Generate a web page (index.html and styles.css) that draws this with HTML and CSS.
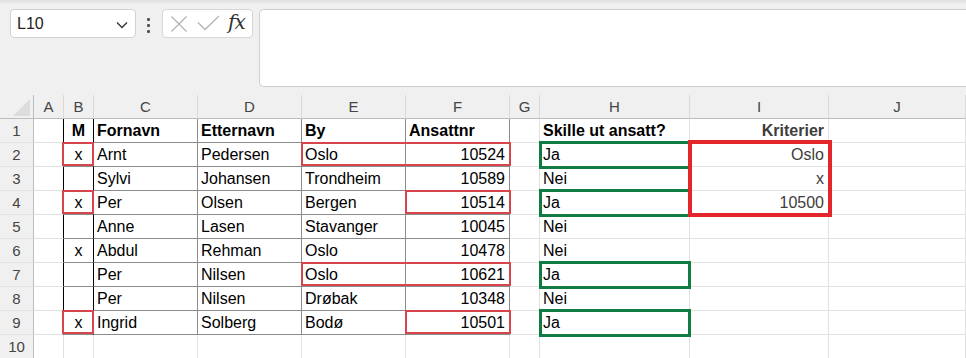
FILE: index.html
```html
<!DOCTYPE html>
<html lang="no">
<head>
<meta charset="utf-8">
<title>Excel</title>
<link rel="stylesheet" href="styles.css">
</head>
<body>
<div class="app">
  <div class="toolbar">
    <div class="namebox">
      <span class="nb-text">L10</span>
      <svg class="chev" width="12" height="8" viewBox="0 0 12 8"><path d="M1 1.5 L6 6.5 L11 1.5" fill="none" stroke="#333" stroke-width="1.3"/></svg>
    </div>
    <div class="dots"><i></i><i></i><i></i></div>
    <div class="iconbox">
      <svg class="ico-x" width="18" height="18" viewBox="0 0 18 18"><path d="M1.5 1.5 L16.5 16.5 M16.5 1.5 L1.5 16.5" stroke="#b3b3b3" stroke-width="1.3" fill="none"/></svg>
      <svg class="ico-ok" width="23" height="16" viewBox="0 0 23 16"><path d="M1 7.5 L8 14.5 L22 1" stroke="#b3b3b3" stroke-width="1.3" fill="none"/></svg>
      <span class="fx">fx</span>
    </div>
    <div class="formula"></div>
  </div>

  <div class="sheet">
    <!-- header row -->
    <div class="corner"><svg width="17" height="17" viewBox="0 0 17 17"><path d="M17 0 L17 17 L0 17 Z" fill="#dcdcdc"/></svg></div>
    <div class="ch">A</div><div class="ch">B</div><div class="ch">C</div><div class="ch">D</div><div class="ch">E</div><div class="ch">F</div><div class="ch">G</div><div class="ch">H</div><div class="ch">I</div><div class="ch">J</div>

    <!-- row 1 -->
    <div class="rh">1</div>
    <div class="c bk"></div>
    <div class="c t bk m b">M</div>
    <div class="c t b">Fornavn</div>
    <div class="c t b">Etternavn</div>
    <div class="c t b">By</div>
    <div class="c t b">Ansattnr</div>
    <div class="c"></div>
    <div class="c b">Skille ut ansatt?</div>
    <div class="c b r g">Kriterier</div>
    <div class="c"></div>

    <!-- row 2 -->
    <div class="rh">2</div>
    <div class="c bk"></div>
    <div class="c t bk m">x<span class="hl hl-1"></span></div>
    <div class="c t">Arnt</div>
    <div class="c t">Pedersen</div>
    <div class="c t">Oslo<span class="hl hl-2"></span></div>
    <div class="c t r">10524</div>
    <div class="c"></div>
    <div class="c">Ja<span class="gr"></span></div>
    <div class="c r g">Oslo<span class="crit"></span></div>
    <div class="c"></div>

    <!-- row 3 -->
    <div class="rh">3</div>
    <div class="c bk"></div>
    <div class="c t bk m"></div>
    <div class="c t">Sylvi</div>
    <div class="c t">Johansen</div>
    <div class="c t">Trondheim</div>
    <div class="c t r">10589</div>
    <div class="c"></div>
    <div class="c">Nei</div>
    <div class="c r g">x</div>
    <div class="c"></div>

    <!-- row 4 -->
    <div class="rh">4</div>
    <div class="c bk"></div>
    <div class="c t bk m">x<span class="hl hl-1"></span></div>
    <div class="c t">Per</div>
    <div class="c t">Olsen</div>
    <div class="c t">Bergen</div>
    <div class="c t r">10514<span class="hl hl-1w"></span></div>
    <div class="c"></div>
    <div class="c">Ja<span class="gr"></span></div>
    <div class="c r g">10500</div>
    <div class="c"></div>

    <!-- row 5 -->
    <div class="rh">5</div>
    <div class="c bk"></div>
    <div class="c t bk m"></div>
    <div class="c t">Anne</div>
    <div class="c t">Lasen</div>
    <div class="c t">Stavanger</div>
    <div class="c t r">10045</div>
    <div class="c"></div>
    <div class="c">Nei</div>
    <div class="c"></div>
    <div class="c"></div>

    <!-- row 6 -->
    <div class="rh">6</div>
    <div class="c bk"></div>
    <div class="c t bk m">x</div>
    <div class="c t">Abdul</div>
    <div class="c t">Rehman</div>
    <div class="c t">Oslo</div>
    <div class="c t r">10478</div>
    <div class="c"></div>
    <div class="c">Nei</div>
    <div class="c"></div>
    <div class="c"></div>

    <!-- row 7 -->
    <div class="rh">7</div>
    <div class="c bk"></div>
    <div class="c t bk m"></div>
    <div class="c t">Per</div>
    <div class="c t">Nilsen</div>
    <div class="c t">Oslo<span class="hl hl-2"></span></div>
    <div class="c t r">10621</div>
    <div class="c"></div>
    <div class="c">Ja<span class="gr"></span></div>
    <div class="c"></div>
    <div class="c"></div>

    <!-- row 8 -->
    <div class="rh">8</div>
    <div class="c bk"></div>
    <div class="c t bk m"></div>
    <div class="c t">Per</div>
    <div class="c t">Nilsen</div>
    <div class="c t">Drøbak</div>
    <div class="c t r">10348</div>
    <div class="c"></div>
    <div class="c">Nei</div>
    <div class="c"></div>
    <div class="c"></div>

    <!-- row 9 -->
    <div class="rh">9</div>
    <div class="c bk"></div>
    <div class="c t bk m">x<span class="hl hl-1"></span></div>
    <div class="c t">Ingrid</div>
    <div class="c t">Solberg</div>
    <div class="c t">Bodø</div>
    <div class="c t r">10501<span class="hl hl-1w"></span></div>
    <div class="c"></div>
    <div class="c">Ja<span class="gr"></span></div>
    <div class="c"></div>
    <div class="c"></div>

    <!-- row 10 -->
    <div class="rh">10</div>
    <div class="c"></div>
    <div class="c"></div>
    <div class="c"></div>
    <div class="c"></div>
    <div class="c"></div>
    <div class="c"></div>
    <div class="c"></div>
    <div class="c"></div>
    <div class="c"></div>
    <div class="c"></div>
  </div>
</div>
</body>
</html>
```

FILE: styles.css
```css
* { box-sizing: border-box; }
html, body { margin: 0; padding: 0; }
body {
  background: #f0f0f0;
  font-family: "Liberation Sans", Arial, sans-serif;
  width: 966px;
  height: 358px;
  overflow: hidden;
}
.app { width: 966px; }

.toolbar {
  height: 95px;
  display: flex;
  align-items: flex-start;
  padding-top: 9px;
  background: linear-gradient(#e0e0e0 0, #f0f0f0 5px);
}
.namebox {
  margin-left: 10px;
  width: 126px;
  height: 29px;
  background: #fff;
  border: 1px solid #d2d2d2;
  border-radius: 4px;
  display: flex;
  align-items: center;
  padding: 0 7px 0 6px;
  justify-content: space-between;
}
.nb-text { font-size: 16px; color: #222; }
.chev { margin-top: 2px; }
.dots {
  margin-left: 11px;
  width: 3px;
  padding-top: 9px;
  display: flex;
  flex-direction: column;
  gap: 3px;
}
.dots i { display: block; width: 3px; height: 3px; background: #555; border-radius: 1px; }
.iconbox {
  margin-left: 12px;
  width: 91px;
  height: 29px;
  background: #fff;
  border: 1px solid #d6d6d6;
  border-radius: 4px;
  display: flex;
  align-items: center;
  padding-left: 7px;
}
.ico-x { margin-right: 9px; }
.ico-ok { margin-right: 8px; margin-top: -1px; }
.fx {
  font-family: "DejaVu Serif", "Liberation Serif", serif;
  font-style: italic;
  font-size: 20px;
  color: #333;
  margin-top: -3px;
  letter-spacing: -1px;
}
.formula {
  margin-left: 6px;
  flex: 1;
  height: 78px;
  background: #fff;
  border: 1px solid #d0d0d0;
  border-right: none;
  border-radius: 5px 0 0 5px;
}

.sheet {
  display: grid;
  grid-template-columns: 34px 30px 30px 104px 104px 104px 104px 30px 150px 139px 137px;
  grid-auto-rows: 24px;
}
.corner {
  background: #f0f0f0;
  border-right: 1px solid #bdbdbd;
  border-bottom: 1px solid #bdbdbd;
  padding: 4px 0 0 13px;
}
.corner svg { display: block; }
.ch {
  background: #f0f0f0;
  border-bottom: 1px solid #bdbdbd;
  border-right: 1px solid #d9d9d9;
  text-align: center;
  font-size: 15px;
  line-height: 23px;
  color: #444;
}
.rh {
  background: #f0f0f0;
  border-right: 1px solid #bdbdbd;
  border-bottom: 1px solid #e4e4e4;
  text-align: center;
  font-size: 15px;
  line-height: 24px;
  color: #444;
}
.c {
  position: relative;
  background: #fff;
  border-right: 1px solid #e1e1e1;
  border-bottom: 1px solid #e1e1e1;
  padding: 1px 3px 0 3px;
  font-size: 16px;
  line-height: 22px;
  color: #000;
  white-space: nowrap;
}
.t { border-right-color: #8c8c8c; border-bottom-color: #8c8c8c; }
.bk { border-right-color: #000; }
.r { text-align: right; padding-right: 4px; }
.m { text-align: center; padding: 1px 0 0 0; }
.b { font-weight: bold; }
.g { color: #3d3d3d; }

/* highlight overlays */
.hl {
  position: absolute;
  border: 2px solid #d6464c;
  pointer-events: none;
  z-index: 1;
}
.hl-1 { left: -2px; top: -1px; width: 32px; height: 24px; }
.hl-1w { left: -1px; top: -1px; width: 106px; height: 24px; }
.hl-2 { left: -1px; top: -1px; width: 210px; height: 24px; }
.gr {
  position: absolute;
  left: -1px;
  top: -2px;
  width: 152px;
  height: 28px;
  border: 3px solid #107c41;
  pointer-events: none;
  z-index: 1;
}
.crit {
  position: absolute;
  left: -2px;
  top: -3px;
  width: 144px;
  height: 77px;
  border: 4px solid #e3262b;
  pointer-events: none;
  z-index: 2;
}
```
